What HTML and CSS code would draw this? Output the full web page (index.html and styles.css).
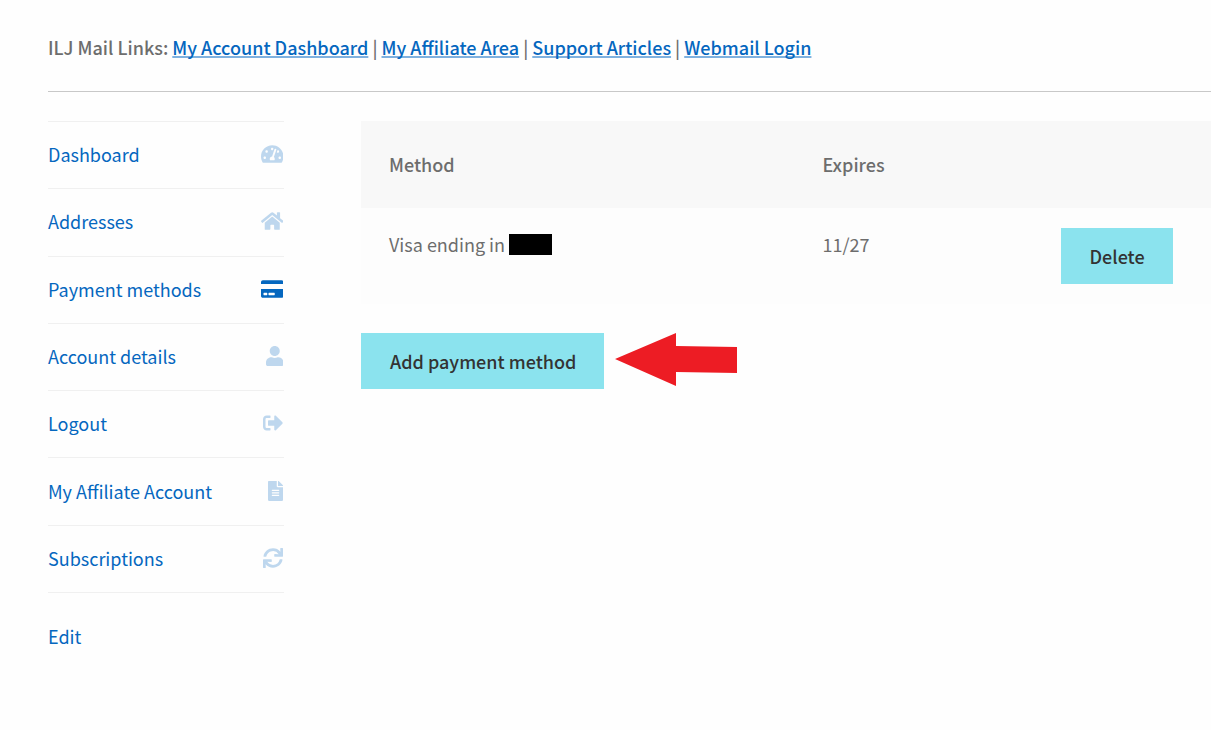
FILE: index.html
```html
<!DOCTYPE html>
<html lang="en">
  <head>
    <meta charset="UTF-8" />
    <meta name="viewport" content="width=device-width, initial-scale=1.0" />
    <title>Payment methods</title>
    <link rel="stylesheet" href="styles.css">
  </head>
  <body>
    <header class="mail-links">
      ILJ Mail Links: <a href="#">My Account Dashboard</a> |
      <a href="#">My Affiliate Area</a> | <a href="#">Support Articles</a> |
      <a href="#">Webmail Login</a>
    </header>
    <div class="account">
      <aside>
        <nav class="account-nav">
          <a href="#">
            Dashboard
            <svg class="icon" viewBox="0 0 576 512"><path d="M288 32C128.94 32 0 160.94 0 320c0 52.8 14.25 102.26 39.06 144.8 5.61 9.62 16.3 15.2 27.44 15.2h443c11.14 0 21.83-5.58 27.44-15.2C561.75 422.26 576 372.8 576 320c0-159.06-128.94-288-288-288zm0 64c14.71 0 26.58 10.13 30.32 23.65-1.11 2.26-2.64 4.23-3.45 6.67l-9.22 27.67c-5.13 3.49-10.97 6.01-17.64 6.01-17.67 0-32-14.33-32-32S270.33 96 288 96zM96 384c-17.67 0-32-14.33-32-32s14.33-32 32-32 32 14.33 32 32-14.33 32-32 32zm48-160c-17.67 0-32-14.33-32-32s14.33-32 32-32 32 14.33 32 32-14.33 32-32 32zm246.77-72.41l-61.33 184C343.13 347.33 352 364.54 352 384c0 11.72-3.38 22.55-8.88 32H232.88c-5.5-9.45-8.88-20.28-8.88-32 0-33.94 26.5-61.43 59.9-63.59l61.34-184.01c4.17-12.56 17.73-19.45 30.36-15.17 12.57 4.19 19.35 17.79 15.17 30.36zm14.66 57.2l15.52-46.55c3.47-1.29 7.13-2.23 11.05-2.23 17.67 0 32 14.33 32 32s-14.33 32-32 32c-11.38-.01-20.89-6.28-26.57-15.22zM480 384c-17.67 0-32-14.33-32-32s14.33-32 32-32 32 14.33 32 32-14.33 32-32 32z"/></svg>
          </a>
          <a href="#">
            Addresses
            <svg class="icon" viewBox="0 0 576 512"><path d="M280.37 148.26L96 300.11V464a16 16 0 0 0 16 16l112.06-.29a16 16 0 0 0 15.92-16V368a16 16 0 0 1 16-16h64a16 16 0 0 1 16 16v95.64a16 16 0 0 0 16 16.05L464 480a16 16 0 0 0 16-16V300L295.67 148.26a12.19 12.19 0 0 0-15.3 0zM571.6 251.47L488 182.56V44.05a12 12 0 0 0-12-12h-56a12 12 0 0 0-12 12v72.61L318.47 43a48 48 0 0 0-61 0L4.34 251.47a12 12 0 0 0-1.6 16.9l25.5 31A12 12 0 0 0 45.15 301l235.22-193.74a12.19 12.19 0 0 1 15.3 0L530.9 301a12 12 0 0 0 16.9-1.6l25.5-31a12 12 0 0 0-1.7-16.93z"/></svg>
          </a>
          <a href="#" class="active">
            Payment methods
            <svg class="icon" viewBox="0 0 576 512"><path d="M0 432c0 26.5 21.5 48 48 48h480c26.5 0 48-21.5 48-48V256H0v176zm192-68c0-6.6 5.4-12 12-12h136c6.6 0 12 5.4 12 12v40c0 6.6-5.4 12-12 12H204c-6.6 0-12-5.4-12-12v-40zm-128 0c0-6.6 5.4-12 12-12h72c6.6 0 12 5.4 12 12v40c0 6.6-5.4 12-12 12H76c-6.6 0-12-5.4-12-12v-40zM576 80v48H0V80c0-26.5 21.5-48 48-48h480c26.5 0 48 21.5 48 48z"/></svg>
          </a>
          <a href="#">
            Account details
            <svg class="icon" viewBox="0 0 448 512"><path d="M224 256c70.7 0 128-57.3 128-128S294.7 0 224 0 96 57.3 96 128s57.3 128 128 128zm89.6 32h-16.7c-22.2 10.2-46.9 16-72.9 16s-50.6-5.8-72.9-16h-16.7C60.2 288 0 348.2 0 422.4V464c0 26.5 21.5 48 48 48h352c26.5 0 48-21.5 48-48v-41.6c0-74.2-60.2-134.4-134.4-134.4z"/></svg>
          </a>
          <a href="#">
            Logout
            <svg class="icon" viewBox="0 0 512 512"><path d="M497 273L329 441c-15 15-41 4.5-41-17v-96H152c-13.3 0-24-10.7-24-24v-96c0-13.3 10.7-24 24-24h136V88c0-21.4 25.9-32 41-17l168 168c9.3 9.4 9.3 24.6 0 34zM192 436v-40c0-6.6-5.4-12-12-12H96c-17.7 0-32-14.3-32-32V160c0-17.7 14.3-32 32-32h84c6.6 0 12-5.4 12-12V76c0-6.6-5.4-12-12-12H96c-53 0-96 43-96 96v192c0 53 43 96 96 96h84c6.6 0 12-5.4 12-12z"/></svg>
          </a>
          <a href="#">
            My Affiliate Account
            <svg class="icon" viewBox="0 0 384 512"><path d="M224 136V0H24C10.7 0 0 10.7 0 24v464c0 13.3 10.7 24 24 24h336c13.3 0 24-10.7 24-24V160H248c-13.2 0-24-10.8-24-24zm64 236c0 6.6-5.4 12-12 12H108c-6.6 0-12-5.4-12-12v-8c0-6.6 5.4-12 12-12h168c6.6 0 12 5.4 12 12v8zm0-64c0 6.6-5.4 12-12 12H108c-6.6 0-12-5.4-12-12v-8c0-6.6 5.4-12 12-12h168c6.6 0 12 5.4 12 12v8zm0-72v8c0 6.6-5.4 12-12 12H108c-6.6 0-12-5.4-12-12v-8c0-6.6 5.4-12 12-12h168c6.6 0 12 5.4 12 12zm96-114.1v6.1H256V0h6.1c6.4 0 12.5 2.5 17 7l97.9 98c4.5 4.5 7 10.6 7 16.9z"/></svg>
          </a>
          <a href="#">
            Subscriptions
            <svg class="icon" viewBox="0 0 512 512"><path d="M440.65 12.57l4 82.77A247.16 247.16 0 0 0 255.83 8C134.73 8 33.91 94.92 12.29 209.82A12 12 0 0 0 24.09 224h49.05a12 12 0 0 0 11.67-9.26 175.91 175.91 0 0 1 317-56.94l-101.46-4.86a12 12 0 0 0-12.57 12v47.41a12 12 0 0 0 12 12H500a12 12 0 0 0 12-12V12a12 12 0 0 0-12-12h-47.37a12 12 0 0 0-11.98 12.57zM255.83 432a175.61 175.61 0 0 1-146-77.8l101.8 4.87a12 12 0 0 0 12.57-12v-47.4a12 12 0 0 0-12-12H12a12 12 0 0 0-12 12V500a12 12 0 0 0 12 12h47.35a12 12 0 0 0 12-12.6l-4.15-82.57A247.17 247.17 0 0 0 255.83 504c121.11 0 221.93-86.92 243.55-201.82a12 12 0 0 0-11.8-14.18h-49.05a12 12 0 0 0-11.67 9.26A175.86 175.86 0 0 1 255.83 432z"/></svg>
          </a>
        </nav>
        <a href="#" class="edit-link">Edit</a>
      </aside>
      <main>
        <table class="methods">
          <thead>
            <tr>
              <th class="col-method">Method</th>
              <th class="col-expires">Expires</th>
              <th></th>
            </tr>
          </thead>
          <tbody>
            <tr>
              <td>Visa ending in <span class="redacted"></span></td>
              <td>11/27</td>
              <td><button class="button" type="button">Delete</button></td>
            </tr>
          </tbody>
        </table>
        <div class="actions">
          <button class="button" type="button">Add payment method</button>
          <svg class="arrow" viewBox="0 0 122 53"><path d="M0 26L61 0v13l61 1v26l-61-1v14z"/></svg>
        </div>
      </main>
    </div>
  </body>
</html>
```
FILE: styles.css
```css
* {
  box-sizing: border-box;
}
body {
  margin: 0;
  padding: 31px 0 32px 48px;
  background-color: #fefefe;
  color: #6d6d6d;
  font-family: "Noto Sans CJK SC", "Noto Sans", sans-serif;
  font-size: 18px;
  line-height: 32px;
}
a {
  color: #0567bf;
  text-decoration: none;
}
.mail-links {
  padding-bottom: 28px;
  border-bottom: 1px solid #c8c8c8;
  margin-bottom: 29px;
  font-weight: 500;
}
.mail-links a {
  text-decoration: underline;
  text-decoration-thickness: 2px;
  text-decoration-color: #7fb1df;
  text-decoration-skip-ink: none;
  text-underline-offset: 1px;
}
.account {
  display: grid;
  grid-template-columns: 236px 1fr;
  gap: 77px;
}
.account-nav {
  display: flex;
  flex-direction: column;
  min-height: 472px;
  border-top: 1px solid #f0f0f0;
}
.account-nav a {
  flex: 1;
  display: flex;
  align-items: center;
  justify-content: space-between;
  padding: 0 1px 2px 0;
  border-bottom: 1px solid #f0f0f0;
}
.icon {
  height: 20px;
  fill: #0567bf;
  opacity: 0.25;
}
.active .icon {
  opacity: 1;
}
.edit-link {
  display: inline-block;
  margin-top: 27px;
}
.methods {
  width: 100%;
  border-collapse: collapse;
  table-layout: fixed;
}
.methods th {
  padding: 27px 28px 28px;
  background-color: #f8f8f8;
  font-weight: 500;
  text-align: left;
}
.methods td {
  padding: 20px 28px;
  background-color: #fdfdfd;
  vertical-align: top;
}
.col-method {
  width: 51%;
}
.col-expires {
  width: 28%;
}
.redacted {
  display: inline-block;
  width: 43px;
  height: 21px;
  background-color: #000;
  vertical-align: -3px;
}
.button {
  display: block;
  padding: 12px 28px 12px 29px;
  border: none;
  background-color: #8be3ee;
  color: #333;
  font: inherit;
  font-weight: 500;
  cursor: pointer;
}
.button:hover {
  background-color: #72cad5;
}
.actions {
  display: flex;
  align-items: flex-start;
  gap: 11px;
  margin-top: 29px;
}
.arrow {
  width: 122px;
  height: 53px;
  fill: #ed1c24;
}
@media (max-width: 768px) {
  .account {
    grid-template-columns: 1fr;
    gap: 32px;
  }
}
```
